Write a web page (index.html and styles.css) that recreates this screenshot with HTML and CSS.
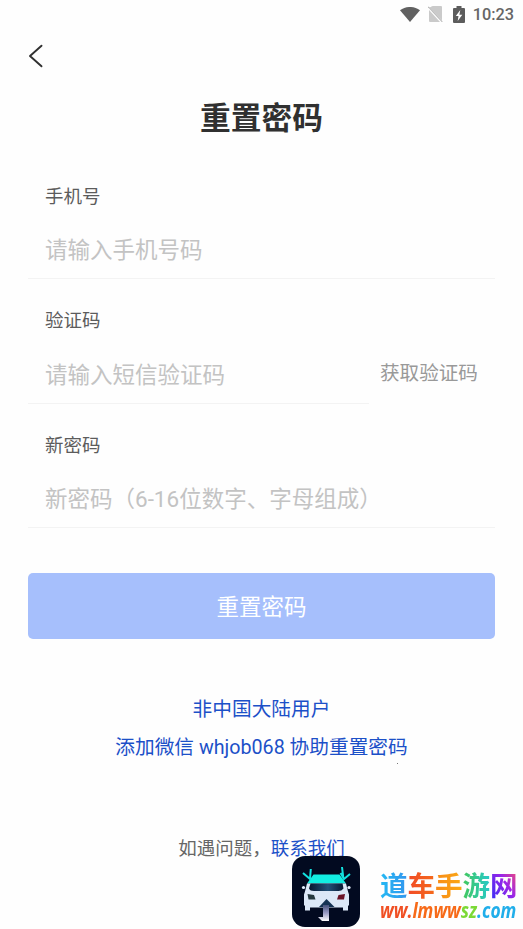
FILE: index.html
```html
<!DOCTYPE html>
<html lang="zh-CN">
<head>
<meta charset="utf-8">
<title>重置密码</title>
<link rel="stylesheet" href="styles.css">
</head>
<body>
<div class="status">
  <svg class="wifi" width="20" height="15" viewBox="0 0 20 15"><path d="M0 3.2C5.7-1.1 14.3-1.1 20 3.2L10 15Z" fill="#616161"/></svg>
  <svg class="sim" width="15" height="16" viewBox="0 0 15 16"><path d="M5 0h8q1 0 1 1v13.5L1.2 1.6 2.8.9Q4 0 5 0ZM1 4l11 12H2q-1 0-1-1Z" fill="#cacaca"/><path d="M.3.8l14 15" stroke="#bcbcbc" stroke-width="1.2"/></svg>
  <svg class="battery" width="12" height="17" viewBox="0 0 12 17"><path d="M3.5 0h5v2H11q1 0 1 1v13q0 1-1 1H1q-1 0-1-1V3q0-1 1-1h2.500Z" fill="#5c5c5c"/><path d="M7.300 4L2.800 10h2.700l-.8 5 4.600-6.200H6.400Z" fill="#fff"/></svg>
  <span class="clock">10:23</span>
</div>
<nav class="nav"><svg width="16" height="24" viewBox="0 0 16 24"><path d="M13.500 1.700L2 12l11.500 10.300" fill="none" stroke="#303030" stroke-width="1.900" stroke-linecap="round" stroke-linejoin="round"/></svg></nav>
<h1 class="title">重置密码</h1>
<main class="form">
  <div class="field">
    <div class="label">手机号</div>
    <div class="control"><span class="placeholder">请输入手机号码</span></div>
  </div>
  <div class="field split">
    <div class="entry">
      <div class="label">验证码</div>
      <div class="control"><span class="placeholder">请输入短信验证码</span></div>
    </div>
    <div class="code">获取验证码</div>
  </div>
  <div class="field">
    <div class="label">新密码</div>
    <div class="control"><span class="placeholder">新密码（6-16位数字、字母组成）</span></div>
  </div>
  <div class="submit">重置密码</div>
</main>
<div class="overseas">
  <div>非中国大陆用户</div>
  <div>添加微信 whjob068 协助重置密码</div>
</div>
<footer class="help">如遇问题，<span class="contact">联系我们</span></footer>
<i class="speck"></i>
<div class="watermark">
  <svg class="emblem" width="68" height="71" viewBox="0 0 68 71">
    <defs>
      <linearGradient id="arrow" x1="0" y1="0" x2="0" y2="1"><stop offset="0" stop-color="#44517c"/><stop offset=".5" stop-color="#9a9bc4"/><stop offset="1" stop-color="#fff"/></linearGradient>
      <linearGradient id="glass" x1="0" y1="0" x2="1" y2="0"><stop offset="0" stop-color="#06142e"/><stop offset=".55" stop-color="#235078"/><stop offset="1" stop-color="#081831"/></linearGradient>
    </defs>
    <rect width="68" height="71" rx="13" fill="#020a20"/>
    <path d="M21.500 18.500h26l6.500 9H15Z" fill="#12eee2"/>
    <path d="M15 27.500h39l2 8 1 3v11h-1v5h-5v-3H18v3h-5v-5h-1v-11l1-3Z" fill="#dce8f7"/>
    <path d="M18.500 27.500h32l1 5q-2 2.500-5 2.500H22q-4 0-5-2.500Z" fill="url(#glass)"/>
    <circle cx="11.500" cy="31.500" r="1.600" fill="#e7f1ff"/><circle cx="57" cy="31.500" r="1.600" fill="#e7f1ff"/>
    <path d="M15.500 38l6.500 1 1.500 4.500h-7Z" fill="#26393f"/><path d="M53 38l-6.500 1-1.500 4.500h7Z" fill="#6b1428"/>
    <path d="M27 51l7.500-8 8 8Z" fill="#153354"/>
    <path d="M31 49h6v16h-7l-4-4h5Z" fill="url(#arrow)"/>
    <path d="M11 17l7 6 .8-10M48.500 17l3.500 6 6-5M51.500 23l-1.500-12" fill="none" stroke="#12e2df" stroke-width="2"/>
  </svg>
  <div class="wordmark">
    <div class="name"><span class="c1">道</span><span class="c2">车</span><span class="c3">手</span><span class="c4">游</span><span class="c5">网</span></div>
    <div class="site"><span class="s1">ww.</span><span class="s1b">lmww</span><span class="s2">sz</span><span class="s3">.com</span></div>
  </div>
</div>
</body>
</html>
```
FILE: styles.css
```css
* { box-sizing: border-box; }
body {
  margin: 0;
  width: 523px;
  height: 929px;
  position: relative;
  overflow: hidden;
  background: #fefefe;
  font-family: Roboto, "Noto Sans CJK SC", sans-serif;
}
svg { display: block; }
.status {
  height: 28px;
  padding-right: 9px;
  display: flex;
  align-items: center;
  justify-content: flex-end;
}
.sim { margin-left: 8px; }
.battery { margin-left: 10px; }
.clock { margin-left: 8px; font-size: 16.3px; font-weight: 500; line-height: 28px; color: #666; padding-top: 1px; }
.nav { height: 56px; padding: 16px 0 0 28px; }
.title {
  margin: 0;
  height: 66px;
  font-size: 30.7px;
  line-height: 70px;
  font-weight: 700;
  text-align: center;
  color: #303030;
}
.form { padding: 30px 28px 0; }
.field { height: 124.5px; }
.split { display: flex; }
.entry { width: 341px; }
.label { height: 32px; padding-left: 17px; font-size: 18.5px; line-height: 34px; color: #5c5c5c; }
.split .label { line-height: 33px; }
.control { height: 67px; padding-left: 17px; border-bottom: 1px solid #f3f3f3; }
.placeholder { display: block; font-size: 22.5px; line-height: 77px; color: #c3c3c3; white-space: nowrap; }
.split .placeholder { line-height: 76px; }
.code { padding-left: 11px; font-size: 19.6px; line-height: 138px; color: #999; white-space: nowrap; }
.submit {
  height: 66px;
  margin-top: 19.5px;
  border-radius: 5px;
  background: #a6bffc;
  color: #fff;
  font-size: 22.5px;
  line-height: 69px;
  text-align: center;
}
.overseas { margin-top: 52px; font-size: 19.7px; line-height: 38px; text-align: center; color: #1c50c8; }
.help { margin-top: 63px; font-size: 18.5px; line-height: 38px; text-align: center; color: #666; }
.contact { color: #1c50c8; }
.speck { position: absolute; left: 397px; top: 763px; width: 1px; height: 1px; background: #777; }
.watermark { position: absolute; left: 292px; top: 856px; display: flex; }
.wordmark { width: 137px; margin-left: 20px; padding-top: 11px; white-space: nowrap; }
.name { font: 700 27.5px/34px "Noto Sans CJK SC", sans-serif; }
.name span { -webkit-background-clip: text; background-clip: text; color: transparent; }
.c1 { background-image: linear-gradient(90deg, #24b9f3, #3295ee); }
.c2 { background-image: linear-gradient(90deg, #f14b26, #f56a1b); }
.c3 { background-image: linear-gradient(90deg, #f88a18, #fba914); }
.c4 { background-image: linear-gradient(90deg, #42c85d, #26c9ca); }
.c5 { background-image: linear-gradient(60deg, #3c2df5 10%, #9b25e8 55%, #f24b78 90%); }
.site { font: italic 700 20.5px/19px "Open Sans", sans-serif; transform: scaleX(.85); transform-origin: 0 50%; }
.s1 { color: #f05024; }
.s1b { color: #f76a18; }
.s2 { color: #7bd936; }
.s3 { color: #20aeea; }
```
